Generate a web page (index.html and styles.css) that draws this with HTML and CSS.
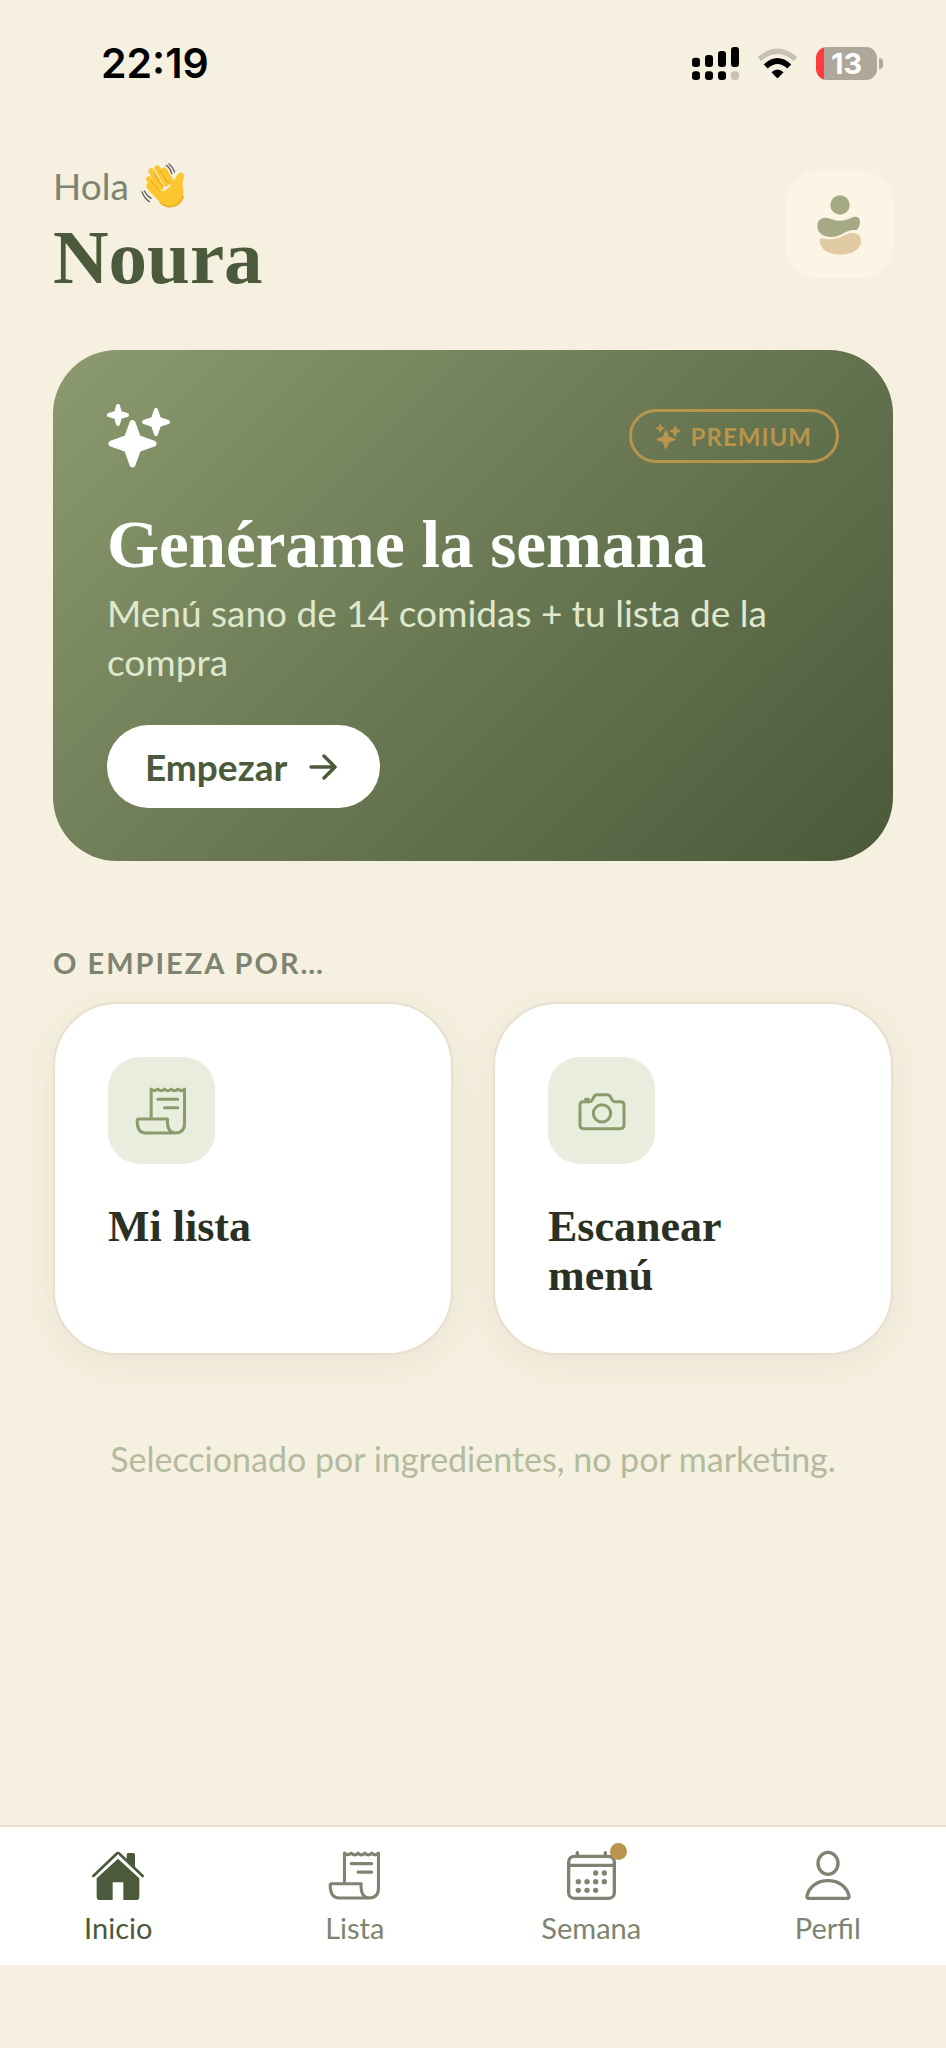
FILE: index.html
```html
<!DOCTYPE html>
<html lang="es">
<head>
    <meta charset="UTF-8">
    <meta name="viewport" content="width=device-width, initial-scale=1.0">
    <title>Noura</title>
    <link rel="stylesheet" href="styles.css">
</head>
<body>
    <svg class="defs" aria-hidden="true">
        <symbol id="sparkles" viewBox="0 0 64 64">
            <g fill="currentColor" stroke="currentColor" stroke-width="6" stroke-linejoin="round">
                <path d="M25.500 19L31 34.200L46.500 39.700L31 45.200L25.500 60.500L20 45.200L4.500 39.700L20 34.200Z"/>
                <path stroke-width="4" d="M49 6L52 15L61 18L52 21L49 30L46 21L37 18L46 15Z"/>
                <path stroke-width="4" d="M11 2L13 9L20 11L13 13L11 20L9 13L2 11L9 9Z"/>
            </g>
        </symbol>
        <symbol id="receipt" viewBox="0 0 158 150">
            <g fill="none" stroke="currentColor" stroke-width="9" stroke-linecap="round" stroke-linejoin="round">
                <path d="M48 98V9q10 10 20 0q10 10 20 0q10 10 20 0q10 10 20 0q10 10 20 0V112q0 29-27 29q-24-2-24-31V99H11q-5 0-5 5q0 37 26 37h90"/>
                <path d="M68 40h60M88 65h40"/>
            </g>
        </symbol>
    </svg>

    <div class="status-bar">
        <span class="time">22:19</span>
        <div class="status-icons">
            <svg width="47" height="33" viewBox="0 0 141 99" aria-hidden="true">
                <rect x="0" y="32" width="24" height="28" rx="9"/>
                <rect x="39" y="24" width="24" height="36" rx="9"/>
                <rect x="78" y="12" width="24" height="48" rx="9"/>
                <rect x="117" y="0" width="24" height="60" rx="9"/>
                <rect x="0" y="73" width="24" height="26" rx="9"/>
                <rect x="39" y="73" width="24" height="26" rx="9"/>
                <rect x="78" y="73" width="24" height="26" rx="9"/>
                <rect x="117" y="73" width="24" height="26" rx="9" fill="#c7c2b4"/>
            </svg>
            <svg width="41" height="31" viewBox="0 0 122 92" aria-hidden="true">
                <path d="M7 33Q61-14 115 33" fill="none" stroke="#c7c2b4" stroke-width="16"/>
                <path d="M26 55Q61 22 96 55" fill="none" stroke="#000" stroke-width="17"/>
                <path d="M43 72Q61 56 79 72L64 88Q61 91 58 88Z"/>
            </svg>
            <div class="battery"><span>13</span></div>
        </div>
    </div>

    <main>
        <header class="header">
            <div>
                <p class="hello">Hola
                    <svg width="46" height="46" viewBox="0 0 138 138" role="img" aria-label="Saludo">
                        <g stroke="#fcc62f" stroke-width="17" stroke-linecap="round">
                            <path d="M60 72L31 24M76 62L49 15M90 56L70 22M50 84L24 48"/>
                        </g>
                        <path d="M18 62Q27 51 36 62L63 84Q78 85 96 58L106 40Q113 27 124 30Q132 33 128 45Q122 60 126 78C133 104 115 132 88 132Q70 132 54 115L24 83Q12 71 18 62Z" fill="#fcc62f"/>
                        <path d="M39 32L65 72M56 20L82 62M30 54L54 82" fill="none" stroke="#e9a51f" stroke-width="3" stroke-linecap="round"/>
                        <path d="M56 117Q72 133 92 131Q119 127 127 99" fill="none" stroke="#eda622" stroke-width="4"/>
                        <path d="M76 7Q89 16 92 32M84 3Q96 12 101 27M3 87Q10 106 25 116M10 84Q17 98 30 106" fill="none" stroke="#625b60" stroke-width="4" stroke-linecap="round"/>
                    </svg>
                </p>
                <h1>Noura</h1>
            </div>
            <button class="avatar" type="button" aria-label="Perfil de Noura">
                <svg width="46" height="60" viewBox="0 0 138 180" aria-hidden="true">
                    <circle cx="69" cy="30" r="29" fill="#a5aa85"/>
                    <path d="M1 94C1 72 18 64 39 71C63 79 80 80 101 69C118 61 129 66 129 81Q129 95 119 105C99 103 88 110 74 118C46 133 1 127 1 94Z" fill="#a5aa85"/>
                    <path d="M9 130C40 135 61 133 83 120C105 108 132 113 132 138C132 164 103 179 70 179C33 179 4 161 9 130Z" fill="#e0cba4"/>
                </svg>
            </button>
        </header>

        <section class="hero">
            <div class="hero-top">
                <svg class="hero-icon" aria-hidden="true"><use href="#sparkles"/></svg>
                <span class="badge"><svg aria-hidden="true"><use href="#sparkles"/></svg>PREMIUM</span>
            </div>
            <h2>Genérame la semana</h2>
            <p>Menú sano de 14 comidas + tu lista de la compra</p>
            <button class="start" type="button">Empezar
                <svg width="28" height="28" viewBox="0 0 28 28" fill="none" stroke="currentColor" stroke-width="3.500" stroke-linecap="round" stroke-linejoin="round" aria-hidden="true">
                    <path d="M2 14H26M15 3L26 14L15 25"/>
                </svg>
            </button>
        </section>

        <h3 class="section-title">O EMPIEZA POR…</h3>
        <div class="cards">
            <a class="card" href="#lista">
                <span class="tile"><svg width="53" height="50" aria-hidden="true"><use href="#receipt"/></svg></span>
                <span class="card-title">Mi lista</span>
            </a>
            <a class="card" href="#escanear">
                <span class="tile">
                    <svg width="50" height="40" viewBox="0 0 150 120" fill="none" stroke="currentColor" stroke-width="9" stroke-linejoin="round" stroke-linecap="round" aria-hidden="true">
                        <path d="M9 43Q9 32 19 32H38Q43 32 45 28L51 17Q54 11 61 11H90Q97 11 100 17L106 28Q108 32 113 32H131Q141 32 141 43V103Q141 113 131 113H19Q9 113 9 103Z"/>
                        <circle cx="75" cy="67" r="26"/>
                        <path d="M26 25H34" stroke-width="10"/>
                    </svg>
                </span>
                <span class="card-title">Escanear<br>menú</span>
            </a>
        </div>

        <p class="note">Seleccionado por ingredientes, no por marketing.</p>
    </main>

    <nav class="tabs">
        <a class="tab active" href="#inicio">
            <svg width="54" height="51" viewBox="0 0 162 153" aria-hidden="true">
                <path d="M107 32V14Q107 9 112 9H127Q132 9 132 14V55Z" fill="currentColor"/>
                <path d="M7 78L76 12Q81 6 86 12L155 78" fill="none" stroke="currentColor" stroke-width="8" stroke-linecap="round"/>
                <path d="M17 85L81 26L145 85V140Q145 150 135 150H97V97H65V150H27Q17 150 17 140Z" fill="currentColor"/>
            </svg>
            <span>Inicio</span>
        </a>
        <a class="tab" href="#lista">
            <svg width="56" height="51" aria-hidden="true"><use href="#receipt"/></svg>
            <span>Lista</span>
        </a>
        <a class="tab" href="#semana">
            <span class="tab-icon">
                <svg width="51" height="51" viewBox="0 0 153 153" aria-hidden="true">
                    <g fill="none" stroke="currentColor" stroke-width="10" stroke-linecap="round">
                        <rect x="8" y="19" width="137" height="126" rx="17"/>
                        <path d="M8 46H145M34 8V19M118 8V19"/>
                    </g>
                    <g fill="currentColor">
                        <circle cx="89" cy="69" r="8"/><circle cx="115" cy="69" r="8"/>
                        <circle cx="37" cy="95" r="8"/><circle cx="63" cy="95" r="8"/><circle cx="89" cy="95" r="8"/><circle cx="115" cy="95" r="8"/>
                        <circle cx="37" cy="121" r="8"/><circle cx="63" cy="121" r="8"/><circle cx="89" cy="121" r="8"/>
                    </g>
                </svg>
                <i class="dot"></i>
            </span>
            <span>Semana</span>
        </a>
        <a class="tab" href="#perfil">
            <svg width="48" height="51" viewBox="0 0 144 153" fill="none" stroke="currentColor" stroke-width="10" aria-hidden="true">
                <ellipse cx="72" cy="40" rx="30" ry="33"/>
                <path d="M14 145Q8 145 9 138C15 110 40 92 72 92C104 92 129 110 135 138Q136 145 130 145Z"/>
            </svg>
            <span>Perfil</span>
        </a>
    </nav>
</body>
</html>
```
FILE: styles.css
```css
* {
    box-sizing: border-box;
}
body {
    margin: 0;
    min-height: 100vh;
    display: flex;
    flex-direction: column;
    background-color: #f6f0e0;
    font-family: Lato, "Liberation Sans", sans-serif;
    color: #7d8471;
}
h1, h2, h3, p {
    margin: 0;
}
a {
    color: inherit;
    text-decoration: none;
}
button {
    border: none;
    font-family: inherit;
    cursor: pointer;
}
svg {
    display: block;
}
.defs {
    position: absolute;
    width: 0;
    height: 0;
}

/* status bar */
.status-bar {
    display: flex;
    justify-content: space-between;
    align-items: center;
    height: 126px;
    padding: 0 63px 0 101px;
    color: #000;
}
.time {
    font-family: Inter, sans-serif;
    font-size: 41px;
    font-weight: 600;
}
.status-icons {
    display: flex;
    align-items: center;
    gap: 18px;
}
.battery {
    position: relative;
    width: 61px;
    height: 33px;
    margin-right: 6px;
    border-radius: 11px;
    background: linear-gradient(to right, #ff3b3f 8px, #aea79a 8px);
    color: #fff;
    font-family: Inter, sans-serif;
    font-size: 29px;
    font-weight: 700;
    line-height: 33px;
    text-align: center;
}
.battery::after {
    content: "";
    position: absolute;
    top: 11px;
    right: -6px;
    width: 4px;
    height: 11px;
    border-radius: 0 4px 4px 0;
    background-color: #aea79a;
}

main {
    padding: 31px 53px 40px;
}

/* header */
.header {
    display: flex;
    justify-content: space-between;
    align-items: flex-start;
    margin-bottom: 51px;
}
.hello {
    display: flex;
    align-items: center;
    gap: 12px;
    font-size: 37px;
    line-height: 58px;
}
h1, h2, .card-title {
    font-family: "Liberation Serif", serif;
    font-weight: 700;
}
h1 {
    font-size: 77px;
    line-height: 84px;
    color: #4a5a3a;
}
.avatar {
    display: flex;
    justify-content: center;
    align-items: center;
    width: 107px;
    height: 107px;
    margin-top: 14px;
    padding: 0;
    border-radius: 32px;
    background-color: #fcf5e6;
}

/* weekly menu */
.hero {
    padding: 53px 54px;
    border-radius: 64px;
    background: linear-gradient(135deg, #8c9a6e, #6b7a54 48%, #4a5a3a);
    color: #fff;
}
.hero-top {
    display: flex;
    justify-content: space-between;
    align-items: center;
    height: 66px;
    margin-bottom: 35px;
}
.hero-icon {
    width: 64px;
    height: 64px;
}
.badge {
    display: flex;
    align-items: center;
    gap: 10px;
    height: 54px;
    padding: 0 24px;
    border: 3px solid #b8944c;
    border-radius: 27px;
    color: #b8944c;
    font-size: 24px;
    font-weight: 700;
    letter-spacing: 1px;
}
.badge svg {
    width: 25px;
    height: 25px;
}
.hero h2 {
    font-size: 67px;
    line-height: 80px;
    margin-bottom: 4px;
}
.hero p {
    color: #dfe8ce;
    font-size: 37px;
    line-height: 49px;
    margin-bottom: 39px;
}
.start {
    display: flex;
    align-items: center;
    gap: 22px;
    height: 83px;
    padding: 0 43px 0 38px;
    border-radius: 42px;
    background-color: #fff;
    color: #4a5a3a;
    font-size: 37px;
    font-weight: 700;
}

/* shortcuts */
.section-title {
    margin: 84px 0 21px;
    font-size: 29px;
    font-weight: 700;
    line-height: 36px;
    letter-spacing: 2px;
}
.cards {
    display: grid;
    grid-template-columns: 1fr 1fr;
    gap: 40px;
}
.card {
    display: flex;
    flex-direction: column;
    gap: 38px;
    padding: 53px;
    border: 2px solid #e8dfcc;
    border-radius: 64px;
    background-color: #fff;
    box-shadow: 0 8px 40px rgba(74, 70, 50, 0.07);
}
.tile {
    display: flex;
    justify-content: center;
    align-items: center;
    width: 107px;
    height: 107px;
    border-radius: 32px;
    background-color: #e8eddd;
    color: #8c9a6e;
}
.card-title {
    font-size: 44px;
    line-height: 49px;
    color: #2a3024;
}
.note {
    margin-top: 82px;
    color: #b2bc9d;
    font-size: 34px;
    line-height: 44px;
    text-align: center;
}

/* bottom tabs */
.tabs {
    display: grid;
    grid-template-columns: repeat(4, 1fr);
    margin-top: auto;
    margin-bottom: 83px;
    padding: 23px 0 20px;
    border-top: 2px solid #e8dfcc;
    background-color: #fff;
}
.tab {
    display: flex;
    flex-direction: column;
    align-items: center;
    gap: 10px;
    font-size: 29px;
    line-height: 34px;
}
.tab.active {
    color: #4a5a3a;
}
.tab-icon {
    position: relative;
}
.dot {
    position: absolute;
    top: -7px;
    right: -10px;
    width: 17px;
    height: 17px;
    border-radius: 50%;
    background-color: #b8944c;
}
```
